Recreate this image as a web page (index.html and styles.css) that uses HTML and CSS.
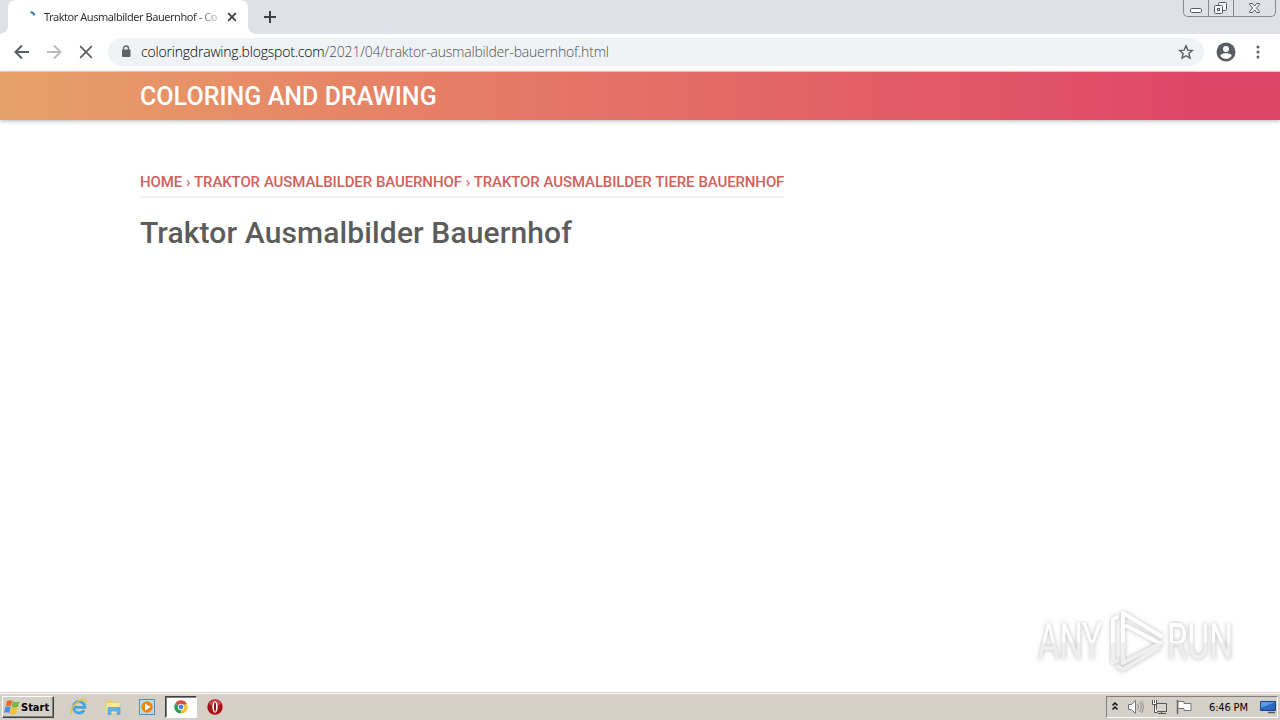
FILE: index.html
```
<!DOCTYPE html>
<html lang="de">
<head>
  <meta charset="UTF-8">
  <meta name="viewport" content="width=device-width, initial-scale=1.0">
  <title>Traktor Ausmalbilder Bauernhof</title>
  <link rel="stylesheet" href="styles.css">
</head>
<body>
  <div class="tab-strip">
    <div class="tab">
      <svg class="spinner" width="16" height="16" viewBox="0 0 16 16"><path d="M7.500 3q3 .5 4 3.500" fill="none" stroke="#3f78bd" stroke-width="2"/></svg>
      <span class="tab-title">Traktor Ausmalbilder Bauernhof - Co</span>
      <svg class="tab-close" width="10" height="10" viewBox="0 0 10 10"><path d="M1.200 1.200l7.600 7.600M8.800 1.200L1.200 8.800" stroke="#3c4043" stroke-width="1.800"/></svg>
    </div>
    <svg class="new-tab" width="14" height="14" viewBox="0 0 14 14"><path d="M7 1v12M1 7h12" stroke="#3c4043" stroke-width="2"/></svg>
    <div class="window-buttons">
      <span class="win-btn"><svg width="24" height="16" viewBox="0 0 24 16"><rect x="6.500" y="8.500" width="11" height="4" rx="1" fill="#fff" stroke="#555b66"/></svg></span>
      <span class="win-btn"><svg width="24" height="16" viewBox="0 0 24 16"><g fill="#f4f5f7" stroke="#555b66"><rect x="9.500" y="2.500" width="8" height="8" rx="1"/><rect x="5.500" y="5.500" width="8" height="8" rx="1"/><rect x="8.500" y="8.500" width="2" height="2"/></g></svg></span>
      <span class="win-btn"><svg width="41" height="16" viewBox="0 0 41 16"><path d="M15.500 3.500h3l2 2.500 2-2.500h3v1l-3 3.500 3 3.500v1h-3l-2-2.500-2 2.500h-3v-1l3-3.500-3-3.500z" fill="#f4f5f7" stroke="#555b66"/></svg></span>
    </div>
  </div>

  <div class="toolbar">
    <svg class="nav-icon" width="16" height="16" viewBox="0 0 16 16"><path d="M15 8H2M8 1.500L1.500 8 8 14.500" fill="none" stroke="#5a5d61" stroke-width="2"/></svg>
    <svg class="nav-icon" width="16" height="16" viewBox="0 0 16 16"><path d="M1 8h13M8 1.500L14.500 8 8 14.500" fill="none" stroke="#babcbe" stroke-width="2"/></svg>
    <svg class="nav-icon" width="16" height="16" viewBox="0 0 16 16"><path d="M2.200 2.200l11.600 11.600M13.800 2.200L2.200 13.800" stroke="#5a5d61" stroke-width="1.700"/></svg>
    <div class="address-bar">
      <svg width="10" height="13" viewBox="0 0 10 13"><path d="M2.500 5V3.500a2.500 2.500 0 0 1 5 0V5" fill="none" stroke="#5f6368" stroke-width="1.400"/><rect x="1" y="4.500" width="8.500" height="7.500" rx="1" fill="#5f6368"/></svg>
      <span class="url"><b>coloringdrawing.blogspot.com</b>/2021/04/traktor-ausmalbilder-bauernhof.html</span>
      <svg class="star" width="16" height="16" viewBox="0 0 16 16"><path d="M8 1.800l1.800 4.300 4.600.4-3.500 3 1.100 4.600L8 11.700l-4 2.400 1.100-4.600-3.500-3 4.600-.4z" fill="none" stroke="#5a5d61" stroke-width="1.400"/></svg>
    </div>
    <svg class="profile" width="20" height="20" viewBox="0 0 20 20"><circle cx="10" cy="10" r="9.500" fill="#5a5d61"/><circle cx="10" cy="7" r="3" fill="#fff"/><path d="M4.200 13.700C5 11.800 8 11.300 10 11.300s5 .5 5.800 2.400A7 7 0 0 1 10 16.800a7 7 0 0 1-5.800-3.100z" fill="#fff"/></svg>
    <svg class="menu" width="4" height="16" viewBox="0 0 4 16"><g fill="#5a5d61"><circle cx="2" cy="3" r="1.500"/><circle cx="2" cy="8" r="1.500"/><circle cx="2" cy="13" r="1.500"/></g></svg>
  </div>

  <header class="site-header">
    <div class="site-name">COLORING AND DRAWING</div>
  </header>

  <main class="page">
    <div class="breadcrumb">HOME › TRAKTOR AUSMALBILDER BAUERNHOF › TRAKTOR AUSMALBILDER TIERE BAUERNHOF</div>
    <h1>Traktor Ausmalbilder Bauernhof</h1>
  </main>

  <svg class="watermark" width="220" height="74" viewBox="0 0 220 74">
    <defs>
      <linearGradient id="wm" gradientUnits="userSpaceOnUse" x1="0" y1="0" x2="0" y2="74">
        <stop offset="0.5" stop-color="#fff"/>
        <stop offset="0.52" stop-color="#efefef"/>
      </linearGradient>
    </defs>
    <g class="wm-shape">
      <text class="wm-text" x="8" y="54" textLength="64" lengthAdjust="spacingAndGlyphs">ANY</text>
      <text class="wm-text" x="137" y="54" textLength="66" lengthAdjust="spacingAndGlyphs">RUN</text>
      <g fill="none" stroke="url(#wm)" stroke-width="4" stroke-linejoin="round" stroke-linecap="round">
        <path d="M131 31L93 8v48M131 38L93 58M97 21l32 17"/>
        <path d="M87 12l-4 2.500v43l4-2M93 64.500l36-22M93 64.500l-5-3"/>
      </g>
    </g>
  </svg>

  <div class="taskbar">
    <div class="start">
      <svg width="17" height="16" viewBox="0 0 17 16"><path d="M3 2q3-1.500 5.500 0L7 7.500Q4.500 6 1.500 7.500z" fill="#e66a35"/><path d="M9 2.200Q12 4 15.500 2.500L14 8q-3 1.500-6.300 0z" fill="#79b83d"/><path d="M1.200 8.200q3-1.500 5.500 0L5.200 14Q3 12.500 0 13.700z" fill="#4b8edb"/><path d="M7.300 8.700q2.500 1.500 6.400 0l-1.500 5.800q-3 1.500-6.400 0z" fill="#f3c32f"/></svg>
      <span>Start</span>
    </div>
    <div class="quick-launch">
      <div class="task">
        <svg width="18" height="18" viewBox="0 0 18 18"><path d="M14 12.200A5.700 5.700 0 1 1 14.800 9.300H5" fill="none" stroke="#45a5e2" stroke-width="2.800"/><path d="M2 16.500C-1 13 5 4 12 1.700c4-1.300 5 .5 3.700 3.300" fill="none" stroke="#e6c338" stroke-width="1.500"/></svg>
      </div>
      <div class="task">
        <svg width="18" height="18" viewBox="0 0 18 18"><path d="M2 3l1-1h4l1 1.500h7V14H2z" fill="#e8cf6b"/><path d="M3 5h12l1 3v7H2z" fill="#f8e99d"/><path d="M4 16.500V9.500h12v7h-3V13H7v3.500z" fill="#65b5dc" stroke="#4c96bd" stroke-width=".6"/></svg>
      </div>
      <div class="task">
        <svg width="18" height="18" viewBox="0 0 18 18"><path d="M1.500 1.500h15v15h-15z" fill="#b9dbf5" stroke="#4c8cc0"/><circle cx="9" cy="9" r="5.700" fill="#ef8418"/><path d="M7 5.500L12.500 9 7 12.500z" fill="#fff"/></svg>
      </div>
      <div class="task task-active">
        <svg width="14" height="14" viewBox="0 0 14 14"><path d="M7 7L1.200 3.700A6.600 6.600 0 0 1 12.800 3.700z" fill="#df4937"/><path d="M7 7l5.800-3.300A6.600 6.600 0 0 1 7 13.600z" fill="#f5c52b"/><path d="M7 7v6.600A6.600 6.600 0 0 1 1.200 3.700z" fill="#319c58"/><circle cx="7" cy="7" r="3.200" fill="#fff"/><circle cx="7" cy="7" r="2.400" fill="#4787e8"/></svg>
      </div>
      <div class="task">
        <svg width="16" height="16" viewBox="0 0 16 16"><circle cx="8" cy="8" r="7.700" fill="#a81216"/><path d="M2 5a6.500 6.500 0 0 1 12 0q-6 4-12 0z" fill="#cf4b49"/><ellipse cx="8" cy="8" rx="2.700" ry="5.700" fill="#fff"/><ellipse cx="8" cy="8" rx="1" ry="4.700" fill="#841012"/></svg>
      </div>
    </div>
    <div class="tray">
      <svg width="8" height="12" viewBox="0 0 8 12"><path d="M1.500 4.500L4 2l2.500 2.500M1.500 8.500L4 6l2.500 2.500" fill="none" stroke="#111" stroke-width="1.500"/></svg>
      <svg width="17" height="16" viewBox="0 0 17 16"><path d="M1.500 5.500h3l4-4v13l-4-4h-3z" fill="#fff" stroke="#777"/><path d="M10.500 5q2 3 0 6M12.500 3q3.500 5 0 10M14.500 2q3.500 6 0 12" fill="none" stroke="#8c8c8c"/></svg>
      <svg width="17" height="16" viewBox="0 0 17 16"><path d="M5.500 4.500h10v8h-10zM7 14.500h8M10.500 12.500v2" fill="#d9d6cf" stroke="#555"/><path d="M1.500 1v4.500h4V1M3.500 1v3M3.500 5.500v8h3" fill="#fff" stroke="#555"/></svg>
      <svg width="17" height="16" viewBox="0 0 17 16"><path d="M2.500 1v14" stroke="#666" stroke-width="1.500"/><path d="M3 2.500h6v2h7v7H9v-2H3z" fill="#fff" stroke="#777"/></svg>
      <span class="clock">6:46 PM</span>
      <svg width="16" height="14" viewBox="0 0 16 14"><path d="M.5 1.500h15v9H.5z" fill="#2868bf" stroke="#18458b"/><path d="M1 2h14L1 8z" fill="#5b9be2"/><path d="M8 12.500h7" stroke="#555" stroke-width="1.500"/></svg>
    </div>
  </div>
</body>
</html>
```

FILE: styles.css
```
* {
    box-sizing: border-box;
}
body {
    margin: 0;
    height: 720px;
    display: flex;
    flex-direction: column;
    overflow: hidden;
    position: relative;
    background: #fff;
    font-family: Roboto, sans-serif;
}
svg {
    display: block;
    flex: none;
}

/* browser window */
.tab-strip {
    display: flex;
    flex: none;
    height: 34px;
    padding-left: 8px;
    background: #dee1e8;
}
.tab {
    position: relative;
    display: flex;
    align-items: center;
    width: 240px;
    padding-left: 15px;
    background: #fff;
    border-radius: 8px 8px 0 0;
}
.tab::before,
.tab::after {
    content: "";
    position: absolute;
    bottom: 0;
    width: 8px;
    height: 8px;
}
.tab::before {
    left: -8px;
    background: radial-gradient(circle at 0 0, #dee1e8 7.5px, #fff 8px);
}
.tab::after {
    right: -8px;
    background: radial-gradient(circle at 100% 0, #dee1e8 7.5px, #fff 8px);
}
.spinner {
    margin-top: -1px;
}
.tab-title {
    width: 175px;
    margin-left: 5px;
    white-space: nowrap;
    font: 11px/16px "Noto Sans", sans-serif;
    letter-spacing: -0.46px;
    color: #303336;
    -webkit-mask-image: linear-gradient(90deg, #000 150px, transparent 182px);
    mask-image: linear-gradient(90deg, #000 150px, transparent 182px);
}
.tab-close {
    margin-left: 8px;
}
.new-tab {
    margin: 10px 0 0 15px;
}
.window-buttons {
    display: flex;
    height: 17px;
    margin: 0 4px 0 auto;
    border: 1px solid #858b96;
    border-top: 0;
    border-radius: 0 0 5px 5px;
}
.win-btn + .win-btn {
    border-left: 1px solid #858b96;
}
.toolbar {
    display: flex;
    align-items: center;
    flex: none;
    height: 38px;
    padding: 0 20px 2px 14px;
    border-bottom: 1px solid #f3d5cc;
}
.nav-icon {
    margin-right: 16px;
}
.address-bar {
    display: flex;
    align-items: center;
    width: 1096px;
    height: 28px;
    margin-left: -2px;
    padding: 0 10px 0 13px;
    border-radius: 14px;
    background: #f0f3f6;
}
.url {
    margin-left: 10px;
    font: 300 14px/20px "Open Sans", sans-serif;
    letter-spacing: -0.2px;
    white-space: nowrap;
    color: #4c5054;
}
.url b {
    font-weight: 300;
    color: #000;
}
.star {
    margin-left: auto;
}
.profile {
    margin-left: 12px;
}
.menu {
    margin-left: auto;
}

/* blog page */
.site-header {
    flex: none;
    height: 48px;
    padding-left: 140px;
    background: linear-gradient(90deg, #e7a068, #e67e66 34%, #df4567 95%);
    box-shadow: 0 1px 4px rgba(0, 0, 0, 0.3);
}
.site-name {
    font-size: 25px;
    font-weight: 500;
    line-height: 49px;
    letter-spacing: 0.04px;
    color: #fff;
}
.page {
    flex: 1;
    padding: 50px 140px 0;
}
.breadcrumb {
    width: 644px;
    height: 28px;
    border-bottom: 2px solid #f0f0f0;
    font-size: 15px;
    font-weight: 500;
    line-height: 24px;
    letter-spacing: -0.12px;
    word-spacing: 0.35px;
    white-space: nowrap;
    color: #d2605b;
}
h1 {
    margin: 15px 0 0;
    font-size: 30px;
    font-weight: 500;
    line-height: 40px;
    letter-spacing: 0.12px;
    color: #5c5c5c;
}
.watermark {
    position: absolute;
    left: 1030px;
    top: 605px;
}
.wm-shape {
    filter: drop-shadow(0 0 2px rgba(0, 0, 0, 0.28));
}
.wm-text {
    font: 50px Roboto, sans-serif;
    fill: url(#wm);
}

/* taskbar */
.taskbar {
    display: flex;
    align-items: center;
    flex: none;
    height: 28px;
    padding: 1px 0 0 2px;
    border-top: 1px solid #d4d0c8;
    background: #d4d0c8;
    box-shadow: inset 0 1px #fff;
    font-family: "DejaVu Sans", sans-serif;
}
.start {
    display: flex;
    align-items: center;
    width: 52px;
    height: 22px;
    padding-left: 1px;
    border: 1px solid;
    border-color: #fff #404040 #404040 #fff;
    box-shadow: inset -1px -1px #808080;
    font: bold 11px "DejaVu Sans Condensed", "DejaVu Sans", sans-serif;
    color: #000;
}
.quick-launch {
    display: flex;
    margin-left: 9px;
}
.task {
    display: flex;
    align-items: center;
    justify-content: center;
    width: 32px;
    height: 22px;
    margin-right: 2px;
}
.task-active {
    background: #fff;
    border: 1px solid;
    border-color: #404040 #fff #fff #404040;
    box-shadow: inset 1px 1px #808080;
}
.tray {
    display: flex;
    align-items: center;
    width: 172px;
    height: 22px;
    margin: 0 2px 0 auto;
    padding: 0 0 0 4px;
    gap: 7px;
    border: 1px solid;
    border-color: #808080 #fff #fff #808080;
}
.tray svg:nth-child(n + 2):nth-child(-n + 4) {
    margin: 0 -1px 0 1px;
}
.clock {
    width: 41px;
    margin: 0 3px 0 11px;
    font: 11px "DejaVu Sans Condensed", "DejaVu Sans", sans-serif;
    letter-spacing: -0.15px;
    white-space: nowrap;
    color: #000;
}
```
